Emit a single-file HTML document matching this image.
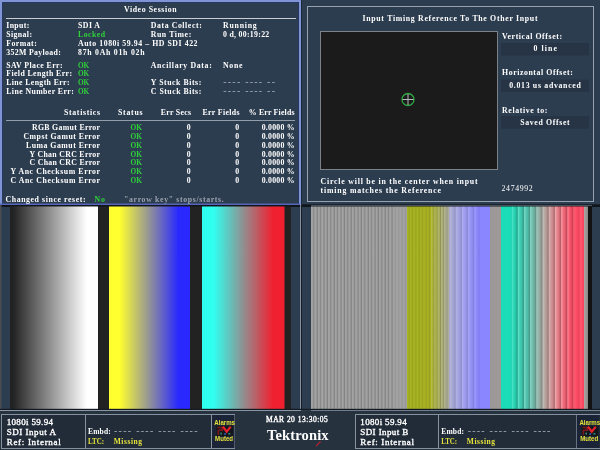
<!DOCTYPE html>
<html><head><meta charset="utf-8"><title>Video Session</title>
<style>
html,body{margin:0;padding:0;background:#2d3d50;overflow:hidden}
svg{display:block;will-change:transform}
text.s{font-family:"Liberation Serif","DejaVu Serif",serif}
text.a{font-family:"Liberation Sans","DejaVu Sans",sans-serif;font-weight:bold}
</style></head><body>
<svg width="600" height="450" viewBox="0 0 600 450">
<defs>
<linearGradient id="gw" x1="0" x2="1" y1="0" y2="0"><stop offset="0" stop-color="#202020"/><stop offset="0.04" stop-color="#242424"/><stop offset="0.875" stop-color="#fff"/><stop offset="1" stop-color="#fff"/></linearGradient>
<linearGradient id="gyb" x1="0" x2="1" y1="0" y2="0"><stop offset="0" stop-color="#ffff30"/><stop offset="0.13" stop-color="#ffff30"/><stop offset="0.86" stop-color="#2828ff"/><stop offset="1" stop-color="#2828ff"/></linearGradient>
<linearGradient id="gcr" x1="0" x2="1" y1="0" y2="0"><stop offset="0" stop-color="#30fff0"/><stop offset="0.14" stop-color="#30fff0"/><stop offset="0.86" stop-color="#f02030"/><stop offset="1" stop-color="#f02030"/></linearGradient>
<linearGradient id="gr" gradientUnits="userSpaceOnUse" x1="311" x2="588" y1="0" y2="0">
<stop offset="0.0000" stop-color="#a3a3a3"/>
<stop offset="0.3462" stop-color="#a2a2a2"/>
<stop offset="0.3477" stop-color="#a8b422"/>
<stop offset="0.4332" stop-color="#a8b022"/>
<stop offset="0.4982" stop-color="#a4a498"/>
<stop offset="0.5000" stop-color="#acacd0"/>
<stop offset="0.5523" stop-color="#a0a0f0"/>
<stop offset="0.6065" stop-color="#8a86ff"/>
<stop offset="0.6462" stop-color="#8a86ff"/>
<stop offset="0.6480" stop-color="#9c9898"/>
<stop offset="0.6852" stop-color="#a09898"/>
<stop offset="0.6866" stop-color="#1cdcb8"/>
<stop offset="0.7256" stop-color="#1cdcb8"/>
<stop offset="0.7906" stop-color="#5cc4b0"/>
<stop offset="0.8375" stop-color="#b0aca4"/>
<stop offset="0.8845" stop-color="#e88890"/>
<stop offset="0.9350" stop-color="#ff5068"/>
<stop offset="0.9856" stop-color="#ff4860"/>
<stop offset="0.9866" stop-color="#aca4a4"/>
<stop offset="1.0000" stop-color="#888"/>
</linearGradient>
<linearGradient id="saw" x1="0" x2="1" y1="0" y2="0"><stop offset="0" stop-color="#fff" stop-opacity="0.30"/><stop offset="0.25" stop-color="#fff" stop-opacity="0.10"/><stop offset="0.6" stop-color="#000" stop-opacity="0.05"/><stop offset="1" stop-color="#000" stop-opacity="0.26"/></linearGradient>
<linearGradient id="saw3" x1="0" x2="1" y1="0" y2="0"><stop offset="0" stop-color="#fff" stop-opacity="0.22"/><stop offset="0.5" stop-color="#fff" stop-opacity="0.0"/><stop offset="1" stop-color="#000" stop-opacity="0.28"/></linearGradient>
<pattern id="st" patternUnits="userSpaceOnUse" x="311" y="0" width="3.4" height="10"><rect x="2.2" y="0" width="1.2" height="10" fill="#000" fill-opacity="0.2"/></pattern>
<pattern id="st2" patternUnits="userSpaceOnUse" x="511.5" y="0" width="6.2" height="10"><rect x="0" y="0" width="6.2" height="10" fill="url(#saw)"/></pattern>
<pattern id="st3" patternUnits="userSpaceOnUse" x="431" y="0" width="3.3" height="10"><rect x="0" y="0" width="3.3" height="10" fill="url(#saw3)"/></pattern>
</defs>
<g>
<rect x="0" y="0" width="600" height="450" fill="#2d3d50" />
<rect x="0" y="205" width="600" height="2" fill="#10151c" />
<rect x="10" y="206.5" width="281" height="202.5" fill="#222" />
<rect x="10" y="206.5" width="88" height="202.5" fill="url(#gw)" />
<rect x="109" y="206.5" width="81" height="202.5" fill="url(#gyb)" />
<rect x="202" y="206.5" width="82.5" height="202.5" fill="url(#gcr)" />
<rect x="0" y="205" width="1.5" height="204.5" fill="#4a4e54" />
<rect x="302" y="204" width="298" height="1" fill="#1a222e" />
<rect x="311" y="205" width="281" height="0.8" fill="#56626f" />
<rect x="311" y="206.5" width="281" height="202.5" fill="#121212" />
<rect x="311" y="206.5" width="277" height="202.5" fill="url(#gr)" />
<rect x="311" y="206.5" width="82" height="202.5" fill="url(#st)" />
<rect x="393" y="206.5" width="14" height="202.5" fill="url(#st)" opacity="0.4"/>
<rect x="407.3" y="206.5" width="24" height="202.5" fill="url(#st)" opacity="0.45"/>
<rect x="431" y="206.5" width="18.5" height="202.5" fill="url(#st3)" />
<rect x="449.5" y="206.5" width="30" height="202.5" fill="url(#st2)" opacity="0.5"/>
<rect x="511.5" y="206.5" width="62" height="202.5" fill="url(#st2)" />
<rect x="573.5" y="206.5" width="10.5" height="202.5" fill="url(#st2)" opacity="0.4"/>
<line x1="300.5" y1="205" x2="300.5" y2="410.5" stroke="#8490a0" stroke-width="1"/>
<line x1="301.5" y1="205" x2="301.5" y2="409" stroke="#161c26" stroke-width="1"/>
<rect x="0" y="408.8" width="600" height="1.2" fill="#141a22" />
<rect x="0" y="410" width="301" height="1" fill="#8a96a4" />
<rect x="311" y="410" width="289" height="1" fill="#6e7c8c" />
<rect x="0" y="0" width="301" height="205" fill="#7e94d4" />
<rect x="2" y="2" width="297" height="202" fill="#263760" />
<rect x="3" y="3" width="295" height="201" fill="#2d3d50" />
<rect x="0" y="203.5" width="300" height="1.5" fill="#5665b6" />
<rect x="6" y="18" width="290" height="1" fill="#c8ced6" />
<text class="s" x="124.00" y="12.00" font-size="7.8" font-weight="bold" fill="#fff" textLength="52.50" lengthAdjust="spacing">Video Session</text>
<text class="s" x="6.25" y="28.25" font-size="7.8" font-weight="bold" fill="#fff" textLength="23.00" lengthAdjust="spacing">Input:</text>
<text class="s" x="6.25" y="36.75" font-size="7.8" font-weight="bold" fill="#fff" textLength="25.75" lengthAdjust="spacing">Signal:</text>
<text class="s" x="6.25" y="45.50" font-size="7.8" font-weight="bold" fill="#fff" textLength="30.50" lengthAdjust="spacing">Format:</text>
<text class="s" x="6.25" y="54.50" font-size="7.8" font-weight="bold" fill="#fff" textLength="54.50" lengthAdjust="spacing">352M Payload:</text>
<text class="s" x="6.25" y="67.50" font-size="7.8" font-weight="bold" fill="#fff" textLength="56.25" lengthAdjust="spacing">SAV Place Err:</text>
<text class="s" x="6.25" y="76.25" font-size="7.8" font-weight="bold" fill="#fff" textLength="65.75" lengthAdjust="spacing">Field Length Err:</text>
<text class="s" x="6.25" y="84.75" font-size="7.8" font-weight="bold" fill="#fff" textLength="63.25" lengthAdjust="spacing">Line Length Err:</text>
<text class="s" x="6.25" y="93.50" font-size="7.8" font-weight="bold" fill="#fff" textLength="67.50" lengthAdjust="spacing">Line Number Err:</text>
<text class="s" x="78.00" y="28.25" font-size="7.8" font-weight="bold" fill="#fff" textLength="22.00" lengthAdjust="spacing">SDI A</text>
<text class="s" x="78.00" y="36.75" font-size="7.8" font-weight="bold" fill="#2fd03a" textLength="27.00" lengthAdjust="spacing">Locked</text>
<text class="s" x="78.00" y="45.50" font-size="7.8" font-weight="bold" fill="#fff" textLength="119.50" lengthAdjust="spacing">Auto 1080i 59.94 – HD SDI 422</text>
<text class="s" x="78.00" y="54.50" font-size="7.8" font-weight="bold" fill="#fff" textLength="66.50" lengthAdjust="spacing">87h 0Ah 01h 02h</text>
<text class="s" x="78.00" y="67.50" font-size="7.8" font-weight="bold" fill="#2fd03a" textLength="11.25" lengthAdjust="spacingAndGlyphs">OK</text>
<text class="s" x="78.00" y="76.25" font-size="7.8" font-weight="bold" fill="#2fd03a" textLength="11.25" lengthAdjust="spacingAndGlyphs">OK</text>
<text class="s" x="78.00" y="84.75" font-size="7.8" font-weight="bold" fill="#2fd03a" textLength="11.25" lengthAdjust="spacingAndGlyphs">OK</text>
<text class="s" x="78.00" y="93.50" font-size="7.8" font-weight="bold" fill="#2fd03a" textLength="11.25" lengthAdjust="spacingAndGlyphs">OK</text>
<text class="s" x="150.75" y="28.25" font-size="7.8" font-weight="bold" fill="#fff" textLength="51.00" lengthAdjust="spacing">Data Collect:</text>
<text class="s" x="150.75" y="36.75" font-size="7.8" font-weight="bold" fill="#fff" textLength="40.50" lengthAdjust="spacing">Run Time:</text>
<text class="s" x="223.00" y="28.25" font-size="7.8" font-weight="bold" fill="#fff" textLength="33.75" lengthAdjust="spacing">Running</text>
<text class="s" x="223.00" y="36.75" font-size="7.8" font-weight="bold" fill="#fff" textLength="46.25" lengthAdjust="spacing">0 d, 00:19:22</text>
<text class="s" x="150.75" y="67.50" font-size="7.8" font-weight="bold" fill="#fff" textLength="61.00" lengthAdjust="spacing">Ancillary Data:</text>
<text class="s" x="223.00" y="67.50" font-size="7.8" font-weight="bold" fill="#fff" textLength="19.50" lengthAdjust="spacing">None</text>
<text class="s" x="150.75" y="84.75" font-size="7.8" font-weight="bold" fill="#fff" textLength="50.50" lengthAdjust="spacing">Y Stuck Bits:</text>
<text class="s" x="150.75" y="93.50" font-size="7.8" font-weight="bold" fill="#fff" textLength="50.50" lengthAdjust="spacing">C Stuck Bits:</text>
<text class="s" x="223.25" y="85.30" font-size="10" font-weight="bold" fill="#98a2ae" textLength="51.75" lengthAdjust="spacing">---- ---- --</text>
<text class="s" x="223.25" y="94.30" font-size="10" font-weight="bold" fill="#98a2ae" textLength="51.75" lengthAdjust="spacing">---- ---- --</text>
<text class="s" x="64.00" y="115.00" font-size="7.8" font-weight="bold" fill="#fff" textLength="36.00" lengthAdjust="spacing">Statistics</text>
<text class="s" x="118.00" y="115.00" font-size="7.8" font-weight="bold" fill="#fff" textLength="24.50" lengthAdjust="spacing">Status</text>
<text class="s" x="160.75" y="115.00" font-size="7.8" font-weight="bold" fill="#fff" textLength="30.25" lengthAdjust="spacing">Err Secs</text>
<text class="s" x="202.50" y="115.00" font-size="7.8" font-weight="bold" fill="#fff" textLength="37.00" lengthAdjust="spacing">Err Fields</text>
<text class="s" x="248.75" y="115.00" font-size="7.8" font-weight="bold" fill="#fff" textLength="45.75" lengthAdjust="spacing">% Err Fields</text>
<rect x="6" y="120" width="289" height="1" fill="#929eac" />
<text class="s" x="32.00" y="129.50" font-size="7.8" font-weight="bold" fill="#fff" textLength="68.00" lengthAdjust="spacing">RGB Gamut Error</text>
<text class="s" x="130.50" y="129.50" font-size="7.8" font-weight="bold" fill="#2fd03a" textLength="11.50" lengthAdjust="spacingAndGlyphs">OK</text>
<text class="s" x="186.75" y="129.50" font-size="7.8" font-weight="bold" fill="#fff" textLength="4.00" lengthAdjust="spacing">0</text>
<text class="s" x="235.25" y="129.50" font-size="7.8" font-weight="bold" fill="#fff" textLength="4.25" lengthAdjust="spacing">0</text>
<text class="s" x="261.75" y="129.50" font-size="7.8" font-weight="bold" fill="#fff" textLength="32.75" lengthAdjust="spacing">0.0000 %</text>
<text class="s" x="23.50" y="138.50" font-size="7.8" font-weight="bold" fill="#fff" textLength="76.50" lengthAdjust="spacing">Cmpst Gamut Error</text>
<text class="s" x="130.50" y="138.50" font-size="7.8" font-weight="bold" fill="#2fd03a" textLength="11.50" lengthAdjust="spacingAndGlyphs">OK</text>
<text class="s" x="186.75" y="138.50" font-size="7.8" font-weight="bold" fill="#fff" textLength="4.00" lengthAdjust="spacing">0</text>
<text class="s" x="235.25" y="138.50" font-size="7.8" font-weight="bold" fill="#fff" textLength="4.25" lengthAdjust="spacing">0</text>
<text class="s" x="261.75" y="138.50" font-size="7.8" font-weight="bold" fill="#fff" textLength="32.75" lengthAdjust="spacing">0.0000 %</text>
<text class="s" x="26.00" y="147.50" font-size="7.8" font-weight="bold" fill="#fff" textLength="74.00" lengthAdjust="spacing">Luma Gamut Error</text>
<text class="s" x="130.50" y="147.50" font-size="7.8" font-weight="bold" fill="#2fd03a" textLength="11.50" lengthAdjust="spacingAndGlyphs">OK</text>
<text class="s" x="186.75" y="147.50" font-size="7.8" font-weight="bold" fill="#fff" textLength="4.00" lengthAdjust="spacing">0</text>
<text class="s" x="235.25" y="147.50" font-size="7.8" font-weight="bold" fill="#fff" textLength="4.25" lengthAdjust="spacing">0</text>
<text class="s" x="261.75" y="147.50" font-size="7.8" font-weight="bold" fill="#fff" textLength="32.75" lengthAdjust="spacing">0.0000 %</text>
<text class="s" x="29.50" y="156.50" font-size="7.8" font-weight="bold" fill="#fff" textLength="70.50" lengthAdjust="spacing">Y Chan CRC Error</text>
<text class="s" x="130.50" y="156.50" font-size="7.8" font-weight="bold" fill="#2fd03a" textLength="11.50" lengthAdjust="spacingAndGlyphs">OK</text>
<text class="s" x="186.75" y="156.50" font-size="7.8" font-weight="bold" fill="#fff" textLength="4.00" lengthAdjust="spacing">0</text>
<text class="s" x="235.25" y="156.50" font-size="7.8" font-weight="bold" fill="#fff" textLength="4.25" lengthAdjust="spacing">0</text>
<text class="s" x="261.75" y="156.50" font-size="7.8" font-weight="bold" fill="#fff" textLength="32.75" lengthAdjust="spacing">0.0000 %</text>
<text class="s" x="29.50" y="165.20" font-size="7.8" font-weight="bold" fill="#fff" textLength="70.50" lengthAdjust="spacing">C Chan CRC Error</text>
<text class="s" x="130.50" y="165.20" font-size="7.8" font-weight="bold" fill="#2fd03a" textLength="11.50" lengthAdjust="spacingAndGlyphs">OK</text>
<text class="s" x="186.75" y="165.20" font-size="7.8" font-weight="bold" fill="#fff" textLength="4.00" lengthAdjust="spacing">0</text>
<text class="s" x="235.25" y="165.20" font-size="7.8" font-weight="bold" fill="#fff" textLength="4.25" lengthAdjust="spacing">0</text>
<text class="s" x="261.75" y="165.20" font-size="7.8" font-weight="bold" fill="#fff" textLength="32.75" lengthAdjust="spacing">0.0000 %</text>
<text class="s" x="10.50" y="174.00" font-size="7.8" font-weight="bold" fill="#fff" textLength="89.50" lengthAdjust="spacing">Y Anc Checksum Error</text>
<text class="s" x="130.50" y="174.00" font-size="7.8" font-weight="bold" fill="#2fd03a" textLength="11.50" lengthAdjust="spacingAndGlyphs">OK</text>
<text class="s" x="186.75" y="174.00" font-size="7.8" font-weight="bold" fill="#fff" textLength="4.00" lengthAdjust="spacing">0</text>
<text class="s" x="235.25" y="174.00" font-size="7.8" font-weight="bold" fill="#fff" textLength="4.25" lengthAdjust="spacing">0</text>
<text class="s" x="261.75" y="174.00" font-size="7.8" font-weight="bold" fill="#fff" textLength="32.75" lengthAdjust="spacing">0.0000 %</text>
<text class="s" x="10.50" y="182.80" font-size="7.8" font-weight="bold" fill="#fff" textLength="89.50" lengthAdjust="spacing">C Anc Checksum Error</text>
<text class="s" x="130.50" y="182.80" font-size="7.8" font-weight="bold" fill="#2fd03a" textLength="11.50" lengthAdjust="spacingAndGlyphs">OK</text>
<text class="s" x="186.75" y="182.80" font-size="7.8" font-weight="bold" fill="#fff" textLength="4.00" lengthAdjust="spacing">0</text>
<text class="s" x="235.25" y="182.80" font-size="7.8" font-weight="bold" fill="#fff" textLength="4.25" lengthAdjust="spacing">0</text>
<text class="s" x="261.75" y="182.80" font-size="7.8" font-weight="bold" fill="#fff" textLength="32.75" lengthAdjust="spacing">0.0000 %</text>
<text class="s" x="5.50" y="201.50" font-size="7.8" font-weight="bold" fill="#fff" textLength="80.00" lengthAdjust="spacing">Changed since reset:</text>
<text class="s" x="94.50" y="201.50" font-size="7.8" font-weight="bold" fill="#2fd03a" textLength="10.50" lengthAdjust="spacing">No</text>
<text class="s" x="124.00" y="201.50" font-size="7.8" font-weight="bold" fill="#98a2ae" textLength="99.75" lengthAdjust="spacing">"arrow key" stops/starts.</text>
<rect x="301" y="0" width="1" height="205" fill="#1c2838" />
<rect x="307" y="6" width="286" height="195" fill="none" stroke="#96a2b0" stroke-width="1" transform="translate(.5,.5)"/>
<text class="s" x="362.50" y="21.10" font-size="7.8" font-weight="bold" fill="#fff" textLength="175.00" lengthAdjust="spacing">Input Timing Reference To The Other Input</text>
<rect x="320" y="31" width="177" height="138" fill="#1b1b1b" stroke="#7c8288" stroke-width="1" transform="translate(.5,.5)"/>
<circle cx="408" cy="99.5" r="6" fill="none" stroke="#2fa844" stroke-width="1.3"/>
<line x1="408" y1="94" x2="408" y2="105" stroke="#b8b8b8" stroke-width="1"/>
<line x1="402.5" y1="99.5" x2="413.5" y2="99.5" stroke="#b8b8b8" stroke-width="1"/>
<text class="s" x="320.60" y="183.90" font-size="7.8" font-weight="bold" fill="#fff" textLength="157.00" lengthAdjust="spacing">Circle will be in the center when input</text>
<text class="s" x="320.60" y="192.90" font-size="7.8" font-weight="bold" fill="#fff" textLength="120.40" lengthAdjust="spacing">timing matches the Reference</text>
<text class="s" x="501.60" y="190.50" font-size="7.8" font-weight="normal" fill="#fff" textLength="31.00" lengthAdjust="spacing">2474992</text>
<text class="s" x="502.00" y="38.50" font-size="7.8" font-weight="bold" fill="#fff" textLength="60.00" lengthAdjust="spacing">Vertical Offset:</text>
<rect x="501" y="43" width="88" height="12.5" fill="#263445" />
<text class="s" x="533.50" y="51.30" font-size="7.8" font-weight="bold" fill="#fff" textLength="23.50" lengthAdjust="spacing">0 line</text>
<text class="s" x="502.00" y="75.40" font-size="7.8" font-weight="bold" fill="#fff" textLength="70.80" lengthAdjust="spacing">Horizontal Offset:</text>
<rect x="501" y="79.5" width="88" height="12.5" fill="#263445" />
<text class="s" x="509.20" y="88.20" font-size="7.8" font-weight="bold" fill="#fff" textLength="71.60" lengthAdjust="spacing">0.013 us advanced</text>
<text class="s" x="502.00" y="112.50" font-size="7.8" font-weight="bold" fill="#fff" textLength="45.40" lengthAdjust="spacing">Relative to:</text>
<rect x="501" y="116.2" width="88" height="12.5" fill="#263445" />
<text class="s" x="520.20" y="125.30" font-size="7.8" font-weight="bold" fill="#fff" textLength="49.40" lengthAdjust="spacing">Saved Offset</text>
<rect x="0" y="411" width="600" height="39" fill="#27323f" />
<rect x="1" y="414" width="233" height="34" fill="#222c39" stroke="#8792a0" stroke-width="1" transform="translate(.5,.5)"/>
<line x1="85.5" y1="414" x2="85.5" y2="448" stroke="#8792a0" stroke-width="1"/>
<line x1="211.5" y1="414" x2="211.5" y2="448" stroke="#8792a0" stroke-width="1"/>
<text class="s" x="6.70" y="424.88" font-size="9" font-weight="normal" fill="#fff" stroke="#fff" stroke-width="0.35" textLength="46.30" lengthAdjust="spacing">1080i 59.94</text>
<text class="s" x="6.70" y="434.88" font-size="9" font-weight="normal" fill="#fff" stroke="#fff" stroke-width="0.35" textLength="49.30" lengthAdjust="spacing">SDI Input A</text>
<text class="s" x="6.70" y="444.58" font-size="9" font-weight="normal" fill="#fff" stroke="#fff" stroke-width="0.35" textLength="54.00" lengthAdjust="spacing">Ref: Internal</text>
<text class="s" x="88.00" y="434.30" font-size="7.5" font-weight="bold" fill="#fff" textLength="22.70" lengthAdjust="spacing">Embd:</text>
<text class="s" x="114.00" y="434.30" font-size="10" font-weight="bold" fill="#98a2ae" textLength="83.50" lengthAdjust="spacing">---- ---- ---- ----</text>
<text class="s" x="88.00" y="444.20" font-size="7.5" font-weight="bold" fill="#e4e23c" textLength="16.00" lengthAdjust="spacingAndGlyphs">LTC:</text>
<text class="s" x="113.70" y="444.20" font-size="7.5" font-weight="bold" fill="#e4e23c" textLength="28.30" lengthAdjust="spacing">Missing</text>
<rect x="212.2" y="415" width="22.3" height="33" fill="#1b2336" />
<rect x="216.5" y="426" width="16.5" height="10" fill="#14161c" />
<path d="M217.3 427.6 L222.3 427.6 L222.3 430.2 L218.3 430.2 L218.3 435" fill="none" stroke="#7c1a20" stroke-width="1.5"/>
<path d="M222.9 426.6 L226.70000000000002 431.6 L230.70000000000002 426.6" fill="none" stroke="#e8202c" stroke-width="2.2"/>
<rect x="220.3" y="432.6" width="1.6" height="2" fill="#2e8878" />
<rect x="224.3" y="433" width="1.6" height="2" fill="#3058a8" />
<rect x="228.3" y="433" width="2" height="1.6" fill="#2e8878" />
<text class="a" x="214.30" y="425.08" font-size="6.6" font-weight="bold" fill="#e4e23c" textLength="20.70" lengthAdjust="spacingAndGlyphs">Alarms</text>
<text class="a" x="215.10" y="440.58" font-size="6.6" font-weight="bold" fill="#e4e23c" textLength="18.00" lengthAdjust="spacingAndGlyphs">Muted</text>
<text class="s" x="266.00" y="421.90" font-size="7.5" font-weight="normal" fill="#fff" stroke="#fff" stroke-width="0.35" textLength="61.70" lengthAdjust="spacing">MAR 20 13:30:05</text>
<text class="s" x="267.00" y="440.44" font-size="14.5" font-weight="bold" fill="#fff" textLength="61.60" lengthAdjust="spacing">Tektronix</text>
<line x1="316" y1="446.2" x2="320.6" y2="441.6" stroke="#c82030" stroke-width="1.1"/>
<rect x="355" y="414" width="250" height="34" fill="#222c39" stroke="#8792a0" stroke-width="1" transform="translate(.5,.5)"/>
<line x1="438.5" y1="414" x2="438.5" y2="448" stroke="#8792a0" stroke-width="1"/>
<line x1="576.5" y1="414" x2="576.5" y2="448" stroke="#8792a0" stroke-width="1"/>
<text class="s" x="360.30" y="424.88" font-size="9" font-weight="normal" fill="#fff" stroke="#fff" stroke-width="0.35" textLength="46.40" lengthAdjust="spacing">1080i 59.94</text>
<text class="s" x="360.30" y="434.88" font-size="9" font-weight="normal" fill="#fff" stroke="#fff" stroke-width="0.35" textLength="48.00" lengthAdjust="spacing">SDI Input B</text>
<text class="s" x="360.30" y="444.58" font-size="9" font-weight="normal" fill="#fff" stroke="#fff" stroke-width="0.35" textLength="53.70" lengthAdjust="spacing">Ref: Internal</text>
<text class="s" x="441.30" y="434.30" font-size="7.5" font-weight="bold" fill="#fff" textLength="22.70" lengthAdjust="spacing">Embd:</text>
<text class="s" x="467.70" y="434.30" font-size="10" font-weight="bold" fill="#98a2ae" textLength="82.70" lengthAdjust="spacing">---- ---- ---- ----</text>
<text class="s" x="441.30" y="444.20" font-size="7.5" font-weight="bold" fill="#e4e23c" textLength="15.70" lengthAdjust="spacingAndGlyphs">LTC:</text>
<text class="s" x="466.80" y="444.20" font-size="7.5" font-weight="bold" fill="#e4e23c" textLength="28.20" lengthAdjust="spacing">Missing</text>
<rect x="576.7" y="415" width="22.3" height="33" fill="#1b2336" />
<rect x="581.6" y="426" width="16.5" height="10" fill="#14161c" />
<path d="M582.4 427.6 L587.4 427.6 L587.4 430.2 L583.4 430.2 L583.4 435" fill="none" stroke="#7c1a20" stroke-width="1.5"/>
<path d="M588.0 426.6 L591.8 431.6 L595.8 426.6" fill="none" stroke="#e8202c" stroke-width="2.2"/>
<rect x="585.4" y="432.6" width="1.6" height="2" fill="#2e8878" />
<rect x="589.4" y="433" width="1.6" height="2" fill="#3058a8" />
<rect x="593.4" y="433" width="2" height="1.6" fill="#2e8878" />
<text class="a" x="579.40" y="425.08" font-size="6.6" font-weight="bold" fill="#e4e23c" textLength="20.70" lengthAdjust="spacingAndGlyphs">Alarms</text>
<text class="a" x="580.20" y="440.58" font-size="6.6" font-weight="bold" fill="#e4e23c" textLength="18.00" lengthAdjust="spacingAndGlyphs">Muted</text>
</g>
</svg>
</body></html>
